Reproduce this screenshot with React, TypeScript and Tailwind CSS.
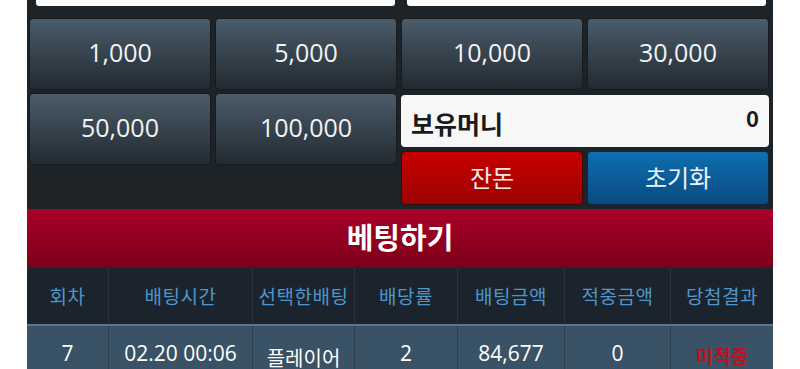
import React from "react";

const numBtn =
  "h-[72px] rounded-[4px] border border-[#171b1f] bg-gradient-to-b from-[#4b5c6a] to-[#232b32] text-[#f1f3f5] text-[25px] flex items-center justify-center leading-none pb-[4px]";

const cols = [
  { label: "회차", w: "w-[81px]", v: "7" },
  { label: "배팅시간", w: "w-[144px]", v: "02.20 00:06" },
  { label: "선택한배팅", w: "w-[102px]", v: "플레이어" },
  { label: "배당률", w: "w-[103px]", v: "2" },
  { label: "배팅금액", w: "w-[107px]", v: "84,677" },
  { label: "적중금액", w: "w-[106px]", v: "0" },
  { label: "당첨결과", w: "flex-1", v: "미적중" },
];

export default function App() {
  return (
    <div className="w-[800px] h-[369px] overflow-hidden bg-white font-['Open_Sans','Noto_Sans_CJK_KR',sans-serif]">
      <div className="ml-[27px] w-[746px] h-[369px] overflow-hidden bg-[#1e2328]">
        {/* top inputs */}
        <div className="flex pl-[9px] gap-[12px]">
          <div className="w-[359px] h-[6px] bg-white rounded-b-[3px]" />
          <div className="w-[359px] h-[6px] bg-white rounded-b-[3px]" />
        </div>
        {/* buttons grid */}
        <div className="mt-[12px] pl-[2px] grid grid-cols-[182px_182px_182px_182px] gap-x-[4px] gap-y-[3px]">
          <div className={numBtn}>1,000</div>
          <div className={numBtn}>5,000</div>
          <div className={numBtn}>10,000</div>
          <div className={numBtn}>30,000</div>
          <div className={numBtn}>50,000</div>
          <div className={numBtn}>100,000</div>
          <div className="col-span-2 flex flex-col">
            <div className="mt-[2px] h-[52px] rounded-[4px] bg-[#f7f7f7] flex items-center justify-between px-[10px] pb-[4px] font-['Noto_Sans_CJK_KR',sans-serif]">
              <span className="text-[25px] font-bold text-[#1a1a1a] mt-[10px]">보유머니</span>
              <span className="text-[22px] font-bold text-[#1a1a1a] -mt-[4px]">0</span>
            </div>
            <div className="mt-[4px] grid grid-cols-2 gap-x-[4px] font-['Noto_Sans_CJK_KR',sans-serif]">
              <div className="h-[54px] rounded-[4px] border border-[#3a0b0b] bg-gradient-to-b from-[#c70000] to-[#9c0202] text-[#f4eaea] text-[24px] flex items-center justify-center pb-[2px]">
                잔돈
              </div>
              <div className="h-[54px] rounded-[4px] border border-[#0a2a44] bg-gradient-to-b from-[#0e6fb0] to-[#0a4b82] text-[#eef4fa] text-[24px] flex items-center justify-center pb-[2px]">
                초기화
              </div>
            </div>
          </div>
        </div>
        {/* bet bar */}
        <div className="mt-[4px] h-[59px] bg-gradient-to-b from-[#a9002a] to-[#7c0019] flex items-center justify-center font-['Noto_Sans_CJK_KR',sans-serif]">
          <span className="text-[29px] font-bold text-white pb-[4px]">베팅하기</span>
        </div>
        {/* table header */}
        <div className="h-[58px] flex bg-[#1b242c] border-b-[2px] border-[#5e7587] font-['Noto_Sans_CJK_KR',sans-serif]">
          {cols.map((c, i) => (
            <div
              key={c.label}
              className={`${c.w} flex items-center justify-center text-[19px] text-[#4e96cc] tracking-[0.5px] ${i > 0 ? "border-l border-[#2b343c]" : ""}`}
            >
              {c.label}
            </div>
          ))}
        </div>
        {/* data row */}
        <div className="h-[57px] flex bg-[#3a5265]">
          {cols.map((c, i) => (
            <div
              key={c.label}
              className={`${c.w} flex items-center justify-center pb-[2px] ${i > 0 ? "border-l border-[#2b3f50]" : ""} ${
                i === 6
                  ? "text-[#c0101e] text-[19px] font-bold font-['Noto_Sans_CJK_KR',sans-serif] pt-[6px]"
                  : i === 2
                  ? "text-white text-[20px] pt-[8px] font-['Noto_Sans_CJK_KR',sans-serif]"
                  : "text-white text-[21px]"
              }`}
            >
              {c.v}
            </div>
          ))}
        </div>
      </div>
    </div>
  );
}
